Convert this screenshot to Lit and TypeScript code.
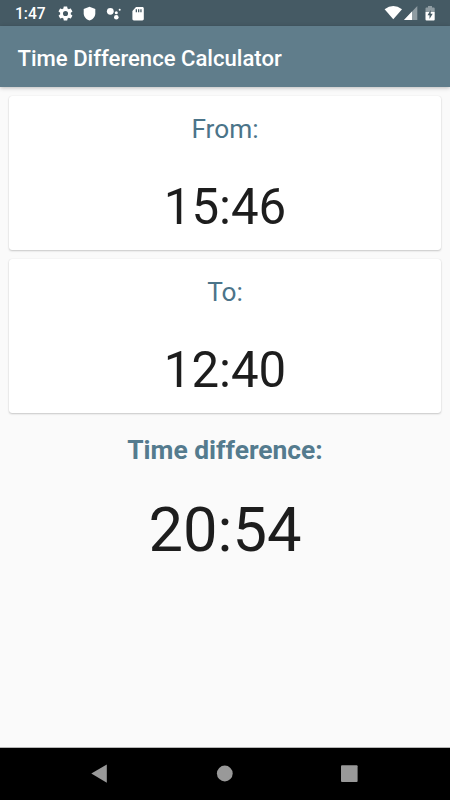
import { LitElement, html, css } from "lit";
import { customElement, property } from "lit/decorators.js";

@customElement("status-bar")
class StatusBar extends LitElement {
  static styles = css`
    :host { display: flex; height: 26px; box-sizing: border-box; background: #455a64; color: #fff; padding: 0 14px 0 15px; justify-content: space-between; font: 500 15.6px/26px Roboto, sans-serif; }
    .left, .right { display: flex; align-items: center; height: 26px; }
    .clock { width: 42px; padding-top: 2px; }
    svg { display: block; fill: currentColor; }
    .gear { margin-top: 1px; }
    .shield { margin: 1px 0 0 8px; }
    .dots { margin: 1px 0 0 8px; }
    .sd { margin: 1px 0 0 8px; }
  `;
  render() {
    return html`
      <div class="left">
        <span class="clock">1:47</span>
        <svg class="gear" width="17" height="17" viewBox="0 0 24 24"><path d="M19.4 13c0-.3.1-.6.1-1s0-.7-.1-1l2.1-1.600c.2-.2.3-.4.1-.7l-2-3.400c-.1-.2-.4-.3-.6-.2l-2.500 1c-.5-.4-1.100-.7-1.700-1l-.4-2.600c0-.3-.2-.5-.5-.5h-4c-.2 0-.4.2-.5.4l-.4 2.700c-.6.2-1.100.6-1.700 1l-2.500-1c-.2-.1-.5 0-.6.2l-2 3.400c-.1.2-.1.5.1.6L4.500 11c0 .3-.1.7-.1 1s0 .7.1 1l-2.100 1.700c-.2.1-.2.4-.1.6l2 3.400c.1.3.4.3.6.300l2.500-1c.5.4 1.100.7 1.700 1l.4 2.600c0 .2.2.4.5.4h4c.2 0 .4-.2.5-.4l.4-2.600c.6-.3 1.100-.6 1.700-1l2.500 1c.2.1.5 0 .6-.3l2-3.400c.1-.2.100-.5-.1-.6zM12 15.600a3.600 3.600 0 1 1 0-7.200 3.600 3.600 0 0 1 0 7.200z"/></svg>
        <svg class="shield" width="16" height="16" viewBox="1 0 16 16"><path d="M8.500.8 14.300 3v4.300c0 3.300-2.400 6.300-5.800 7.300-3.400-1-5.800-4-5.800-7.300V3z"/></svg>
        <svg class="dots" width="16" height="16" viewBox="0 0 16 16"><circle cx="4.300" cy="5.300" r="3.400"/><circle cx="10.300" cy="6.700" r="1.500"/><circle cx="10.300" cy="11.300" r="2.300"/><circle cx="13.700" cy="3.700" r="1"/></svg>
        <svg class="sd" width="16" height="16" viewBox="0 0 16 16"><path fill-rule="evenodd" d="M6 1h6.300c.9 0 1.500.6 1.500 1.400v10.700c0 .8-.6 1.400-1.500 1.400H3.900c-.9 0-1.500-.6-1.500-1.400V5zM5.700 3.200v3h1.300v-3zm2.300 0v3h1.300v-3zm2.300 0v3h1.300v-3z"/></svg>
      </div>
      <div class="right">
        <svg width="52" height="26" viewBox="0 0 52 26">
          <path d="M.6 9.300Q9.300 2.900 18 9.300L9.300 19.300z"/>
          <path opacity=".4" d="M20 20 33.300 6v14z"/>
          <path d="M20 20 28 11.600V20z"/>
          <path opacity=".4" d="M44 6h4v1.500h1.700q1 0 1 1V12h-9.200V8.500q0-1 1-1H44z"/>
          <path d="M41.500 12h9.200v7.500q0 1-1 1h-7.200q-1 0-1-1z"/>
          <path fill="#455a64" d="m46.700 10-3.200 5.200h2V19l3.200-5.200h-2z"/>
        </svg>
      </div>`;
  }
}

@customElement("time-card")
class TimeCard extends LitElement {
  @property() label = "";
  @property() time = "";
  static styles = css`
    :host { display: block; height: 154px; box-sizing: border-box; padding-top: 17px; background: #fff; border-radius: 3px; text-align: center; box-shadow: 0 1px 2px rgba(0,0,0,.2), 0 0 1px rgba(0,0,0,.12); }
    .label { color: #4b7489; font-size: 26.25px; line-height: 32px; }
    .time { color: #1d1d1d; font-size: 49.2px; line-height: 58px; margin-top: 33px; }
  `;
  render() {
    return html`<div class="label">${this.label}</div><div class="time">${this.time}</div>`;
  }
}

@customElement("nav-bar")
class NavBar extends LitElement {
  static styles = css`
    :host { display: flex; height: 52px; background: #000; color: #999; }
    svg { display: block; fill: currentColor; }
  `;
  render() {
    return html`<svg width="450" height="52" viewBox="0 0 450 52">
      <path d="M91.300 25.500 106.800 16.600v18.200z"/>
      <circle cx="224.800" cy="25.500" r="7.900"/>
      <rect x="341" y="17.200" width="16.600" height="16.800" rx="1"/>
    </svg>`;
  }
}

@customElement("app-root")
class AppRoot extends LitElement {
  static styles = css`
    :host { display: flex; flex-direction: column; height: 800px; background: #fafafa; font-family: Roboto, sans-serif; overflow: hidden; }
    .appbar { height: 61px; flex: none; background: #607d8b; color: #fff; padding-left: 17.500px; font-size: 22.1px; font-weight: 500; line-height: 64px; box-shadow: 0 1px 4px rgba(0,0,0,.25); }
    .content { flex: 1; display: flex; flex-direction: column; gap: 9px; padding: 9px; border-bottom: 1px solid #b5b5b5; }
    .result { text-align: center; padding-top: 12px; }
    .label { color: #547b8e; font-size: 26.4px; font-weight: 700; line-height: 32px; }
    .value { color: #1d1d1d; font-size: 61.5px; line-height: 72px; margin-top: 28px; }
  `;
  render() {
    return html`
      <status-bar></status-bar>
      <div class="appbar">Time Difference Calculator</div>
      <div class="content">
        <time-card label="From:" time="15:46"></time-card>
        <time-card label="To:" time="12:40"></time-card>
        <div class="result">
          <div class="label">Time difference:</div>
          <div class="value">20:54</div>
        </div>
      </div>
      <nav-bar></nav-bar>`;
  }
}
